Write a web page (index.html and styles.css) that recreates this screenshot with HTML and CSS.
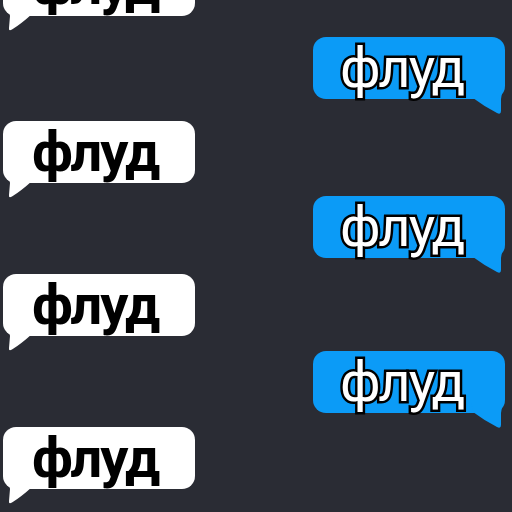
FILE: index.html
```html
<!DOCTYPE html>
<html>
<head>
<meta charset="utf-8">
<link rel="stylesheet" href="styles.css">
</head>
<body>
<div class="chat">
  <div class="msg in m1"><span class="txt">флуд</span><svg class="tail" viewBox="0 50 40 30"><path d="M5 50 L7 62 L6 74 Q5.5 77.5 9 75.5 Q18 70 29 60 L29 50 Z"/></svg></div>
  <div class="msg out m2"><span class="txt">флуд</span><svg class="tail" viewBox="155 50 40 30"><path d="M158 50 L190 50 L188 62 L188 74 Q188 78 184 76 Q172 70 160 61 Z"/></svg></div>
  <div class="msg in m3"><span class="txt">флуд</span><svg class="tail" viewBox="0 50 40 30"><path d="M5 50 L7 62 L6 74 Q5.5 77.5 9 75.5 Q18 70 29 60 L29 50 Z"/></svg></div>
  <div class="msg out m4"><span class="txt">флуд</span><svg class="tail" viewBox="155 50 40 30"><path d="M158 50 L190 50 L188 62 L188 74 Q188 78 184 76 Q172 70 160 61 Z"/></svg></div>
  <div class="msg in m5"><span class="txt">флуд</span><svg class="tail" viewBox="0 50 40 30"><path d="M5 50 L7 62 L6 74 Q5.5 77.5 9 75.5 Q18 70 29 60 L29 50 Z"/></svg></div>
  <div class="msg out m6"><span class="txt">флуд</span><svg class="tail" viewBox="155 50 40 30"><path d="M158 50 L190 50 L188 62 L188 74 Q188 78 184 76 Q172 70 160 61 Z"/></svg></div>
  <div class="msg in m7"><span class="txt">флуд</span><svg class="tail" viewBox="0 50 40 30"><path d="M5 50 L7 62 L6 74 Q5.5 77.5 9 75.5 Q18 70 29 60 L29 50 Z"/></svg></div>
</div>
</body>
</html>
```
FILE: styles.css
```css
html, body {
  margin: 0;
  padding: 0;
  background: #2a2c34;
  overflow: hidden;
  height: 512px;
}
.chat {
  display: flex;
  flex-direction: column;
  align-items: flex-start;
}
.msg {
  position: relative;
  width: 192px;
  height: 62px;
  border-radius: 13px;
  box-sizing: border-box;
  font-family: Roboto, "Liberation Sans", sans-serif;
  font-size: 56px;
  line-height: 62px;
  letter-spacing: -2px;
  white-space: nowrap;
}
.in {
  background: #ffffff;
  margin-left: 3px;
  padding-left: 29px;
  color: #000;
  font-weight: 700;
}
.in .tail path { fill: #ffffff; }
.out {
  background: #0b9bf7;
  margin-left: 313px;
  padding-left: 27px;
  color: #fff;
  font-weight: 400;
  -webkit-text-stroke: 5px #000;
  paint-order: stroke fill;
}
.out .tail path { fill: #0b9bf7; }
.tail {
  position: absolute;
  top: 50px;
  width: 40px;
  height: 30px;
}
.in .tail { left: 0; }
.out .tail { left: 155px; }
.m1 { margin-top: -46px; }
.m2 { margin-top: 21px; }
.m3 { margin-top: 22px; }
.m4 { margin-top: 13px; }
.m5 { margin-top: 16px; }
.m6 { margin-top: 15px; }
.m7 { margin-top: 14px; }
```
